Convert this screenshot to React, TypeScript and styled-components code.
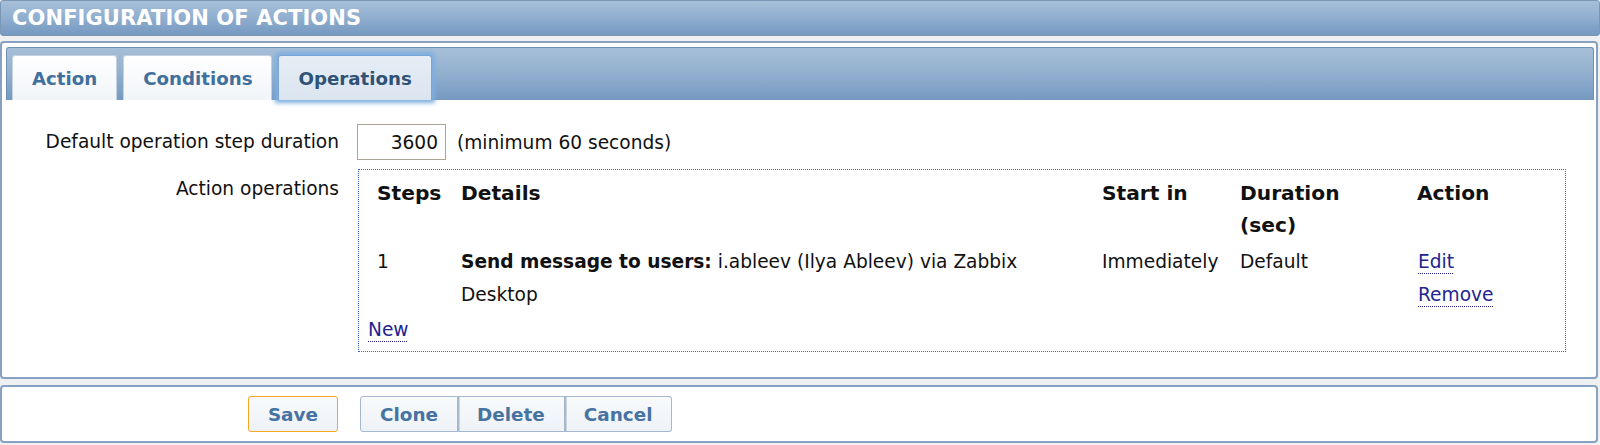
import React from 'react';
import styled, {createGlobalStyle} from 'styled-components';

const GlobalStyle = createGlobalStyle`
  html, body {
    margin: 0;
    padding: 0;
    background: #eef0f2;
  }
  body {
    font-family: 'DejaVu Sans', Verdana, sans-serif;
    font-size: 18.6px;
    color: #111;
  }
`;

const Page = styled.div`
  width: 1600px;
  display: flex;
  flex-direction: column;
`;

const Header = styled.div`
  box-sizing: border-box;
  height: 36px;
  padding-left: 11px;
  display: flex;
  align-items: center;
  border: 1px solid #7b97b6;
  border-radius: 3px;
  background: linear-gradient(to bottom, #a7c0d9 0%, #90aecf 50%, #7599c1 100%);
  color: #fff;
  font-weight: bold;
  font-size: 21px;
  letter-spacing: 0.1px;
`;

const Panel = styled.div<{$top: number}>`
  box-sizing: border-box;
  margin: ${(p) => p.$top}px 2px 0 0;
  border: 2px solid #86a1c1;
  border-radius: 4px;
  background: #fff;
`;

const TabBar = styled.div`
  box-sizing: border-box;
  margin: 4px 2px 0 4px;
  height: 53px;
  padding: 0 5px;
  display: flex;
  align-items: flex-end;
  gap: 6px;
  border: 1px solid #6f8fb3;
  border-bottom: none;
  border-radius: 3px 3px 0 0;
  background: linear-gradient(to bottom, #a6bfd8 0%, #94b1d0 45%, #7599c1 100%);
`;

const Tab = styled.div<{$active?: boolean}>`
  box-sizing: border-box;
  height: 45px;
  padding: 0 19px;
  display: flex;
  align-items: center;
  border: 1px solid ${(p) => (p.$active ? '#7aa6d6' : '#c4d2e1')};
  border-bottom: none;
  border-radius: 3px 3px 0 0;
  background: ${(p) =>
    p.$active
      ? 'linear-gradient(to bottom, #e6edf5 0%, #dbe5f0 100%)'
      : 'linear-gradient(to bottom, #ffffff 0%, #f1f4f8 100%)'};
  box-shadow: ${(p) => (p.$active ? '0 0 4px 3px #7eaee0' : 'none')};
  color: ${(p) => (p.$active ? '#2f5275' : '#41709d')};
  font-weight: bold;
  font-size: 18.2px;
`;

const Form = styled.div`
  display: grid;
  grid-template-columns: 337px 1fr;
  column-gap: 18px;
  row-gap: 9px;
  padding: 24px 30px 25px 0;
  align-items: start;
`;

const Label = styled.div<{$top?: number}>`
  text-align: right;
  line-height: 32px;
  padding-top: ${(p) => p.$top ?? 0}px;
  align-self: ${(p) => (p.$top === undefined ? 'center' : 'start')};
`;

const Field = styled.div`
  display: flex;
  align-items: center;
  gap: 11px;
`;

const NumberInput = styled.input`
  box-sizing: border-box;
  width: 89px;
  height: 36px;
  border: 1px solid #aaa595;
  padding: 0 7px 0 4px;
  text-align: right;
  font-family: inherit;
  font-size: 18.6px;
  color: #111;
  background: #fff;
  outline: none;
`;

const OpsBox = styled.div`
  box-sizing: border-box;
  margin-left: 1px;
  border: 1px dotted #3a66c4;
  padding: 3px 9px 5px 9px;
`;

const Table = styled.table`
  border-collapse: collapse;
  table-layout: fixed;
  width: 100%;
  line-height: 32px;
`;

const Th = styled.th`
  text-align: left;
  vertical-align: top;
  font-weight: bold;
  font-size: 20.2px;
  padding: 4px 0 2px 9px;
`;

const Td = styled.td`
  vertical-align: top;
  line-height: 33px;
  padding: 2px 0 3px 9px;
`;

const DetailsText = styled.div`
  max-width: 590px;
`;

const Link = styled.a`
  color: #232391;
  text-decoration: underline dotted #232391;
  text-decoration-thickness: 1px;
  text-underline-offset: 5px;
  cursor: pointer;
`;

const LinkList = styled.div`
  display: flex;
  flex-direction: column;
  align-items: flex-start;
  padding-left: 1px;
`;

const NewRow = styled.div`
  line-height: 32px;
`;

const ButtonBar = styled.div`
  display: grid;
  grid-template-columns: 336px 1fr;
  column-gap: 22px;
  padding: 9px 0;
`;

const Button = styled.button<{$primary?: boolean}>`
  box-sizing: border-box;
  height: 36px;
  padding: 0 19px;
  border: 1.5px solid ${(p) => (p.$primary ? '#f5a623' : '#a5b8cf')};
  border-radius: 3px;
  background: linear-gradient(to bottom, #f8fafc 0%, #eef2f7 100%);
  color: #4673a1;
  font-family: inherit;
  font-weight: bold;
  font-size: 18.4px;
  cursor: pointer;
`;

const SaveCell = styled.div`
  display: flex;
  justify-content: flex-end;
`;

const Group = styled.div`
  display: flex;
  & > ${Button} {
    border-radius: 0;
  }
  & > ${Button}:first-child {
    border-radius: 3px 0 0 3px;
  }
  & > ${Button}:last-child {
    border-radius: 0 3px 3px 0;
  }
  & > ${Button} + ${Button} {
    border-left: none;
    box-shadow: inset 1.5px 0 0 #a5b8cf;
  }
`;

export default function App() {
  return (
    <Page>
      <GlobalStyle />
      <Header>CONFIGURATION OF ACTIONS</Header>
      <Panel $top={5}>
        <TabBar>
          <Tab>Action</Tab>
          <Tab>Conditions</Tab>
          <Tab $active>Operations</Tab>
        </TabBar>
        <Form>
          <Label>Default operation step duration</Label>
          <Field>
            <NumberInput defaultValue="3600" />
            <span>(minimum 60 seconds)</span>
          </Field>
          <Label $top={4}>Action operations</Label>
          <OpsBox>
            <Table>
              <colgroup>
                <col style={{width: 84}} />
                <col style={{width: 641}} />
                <col style={{width: 138}} />
                <col style={{width: 177}} />
                <col />
              </colgroup>
              <thead>
                <tr>
                  <Th>Steps</Th>
                  <Th>Details</Th>
                  <Th>Start in</Th>
                  <Th>
                    Duration
                    <br />
                    (sec)
                  </Th>
                  <Th>Action</Th>
                </tr>
              </thead>
              <tbody>
                <tr>
                  <Td>1</Td>
                  <Td>
                    <DetailsText>
                      <b>Send message to users:</b> i.ableev (Ilya Ableev) via Zabbix Desktop
                    </DetailsText>
                  </Td>
                  <Td>Immediately</Td>
                  <Td>Default</Td>
                  <Td>
                    <LinkList>
                      <Link>Edit</Link>
                      <Link>Remove</Link>
                    </LinkList>
                  </Td>
                </tr>
              </tbody>
            </Table>
            <NewRow>
              <Link>New</Link>
            </NewRow>
          </OpsBox>
        </Form>
      </Panel>
      <Panel $top={6}>
        <ButtonBar>
          <SaveCell>
            <Button $primary>Save</Button>
          </SaveCell>
          <Group>
            <Button>Clone</Button>
            <Button>Delete</Button>
            <Button>Cancel</Button>
          </Group>
        </ButtonBar>
      </Panel>
    </Page>
  );
}
